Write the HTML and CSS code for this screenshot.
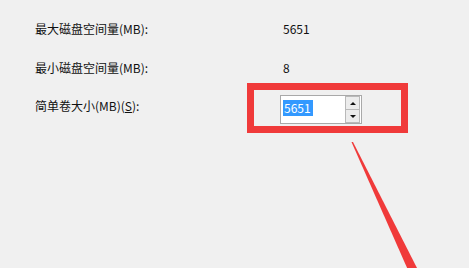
FILE: index.html
```html
<!DOCTYPE html>
<html lang="zh-CN">
<head>
<meta charset="utf-8">
<title>简单卷大小</title>
<link rel="stylesheet" href="styles.css">
</head>
<body>
<div class="page">
  <div class="form">
    <div class="row r1"><span class="label">最大磁盘空间量(MB):</span><span class="value">5651</span></div>
    <div class="row r2"><span class="label">最小磁盘空间量(MB):</span><span class="value">8</span></div>
    <div class="row r3">
      <span class="label">简单卷大小(MB)(<u>S</u>):</span>
      <div class="spin">
        <div class="field"><span class="sel">5651</span></div>
        <div class="buttons">
          <div class="btn"><span class="tri up"></span></div>
          <div class="btn"><span class="tri down"></span></div>
        </div>
      </div>
    </div>
  </div>
  <div class="mark-box"></div>
  <svg class="arrow" width="469" height="268" viewBox="0 0 469 268" xmlns="http://www.w3.org/2000/svg">
    <polygon points="351.5,142 353,142 418,270 408,270" fill="#f03a3a"/>
  </svg>
</div>
</body>
</html>
```

FILE: styles.css
```css
html, body {
  margin: 0;
  padding: 0;
  background: #f0f0f0;
}
.page {
  position: relative;
  width: 469px;
  height: 268px;
  overflow: hidden;
  font-family: "Noto Sans CJK SC", "Noto Sans", sans-serif;
  font-size: 12px;
  color: #111;
}
.form {
  padding: 19px 0 0 35px;
}
.row {
  display: grid;
  grid-template-columns: 245px auto;
  height: 20px;
  align-items: center;
  line-height: 20px;
}
.r2 {
  margin-top: 19px;
}
.r3 {
  margin-top: 17px;
  height: 29px;
  align-items: start;
}
.r3 .label {
  margin-top: 1px;
}
.value {
  padding-left: 3px;
}
.label u {
  text-decoration: underline;
  text-underline-offset: 1px;
}
.spin {
  width: 82px;
  height: 29px;
  box-sizing: border-box;
  border: 1px solid #a9a9a9;
  background: #fff;
  display: flex;
}
.field {
  flex: 1;
  padding: 2px 0 0 2px;
}
.sel {
  display: inline-block;
  background: #3399ff;
  color: #fff;
  line-height: 16px;
  padding: 0 2px 0 1px;
}
.buttons {
  width: 15px;
  margin: 0 1px 0 0;
  display: flex;
  flex-direction: column;
}
.btn {
  flex: 1;
  box-sizing: border-box;
  border: 1px solid #b9b9b9;
  background: #ececec;
  display: flex;
  align-items: center;
  justify-content: center;
}
.btn + .btn {
  border-top: none;
}
.tri {
  width: 0;
  height: 0;
  border-left: 3px solid transparent;
  border-right: 3px solid transparent;
}
.tri.up {
  border-bottom: 3px solid #111;
}
.tri.down {
  border-top: 3px solid #111;
}
.mark-box {
  position: absolute;
  left: 247px;
  top: 83px;
  width: 161px;
  height: 50px;
  box-sizing: border-box;
  border: 7px solid #f03a3a;
}
.arrow {
  position: absolute;
  left: 0;
  top: 0;
}
```
